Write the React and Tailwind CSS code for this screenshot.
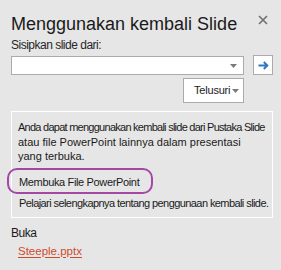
import React from 'react';

const Caret = ({ className }) => (
  <svg className={className} width="7" height="4" viewBox="0 0 7 4">
    <path d="M0 0H7L3.5 4Z" fill="#7a7a7a" />
  </svg>
);

const App = () => {
  return (
    <div className="w-[281px] h-[270px] bg-[#e6e6e6] pl-[11px] pr-[8px] font-['Liberation_Sans',Arial,sans-serif] text-[#262626] overflow-hidden">
      {/* Header */}
      <div className="flex items-start justify-between pt-[12px] pr-[5px]">
        <h1 className="text-[18px] leading-[24px] text-[#1a1a1a]">Menggunakan kembali Slide</h1>
        <button className="mt-[3px]" aria-label="Tutup">
          <svg width="10" height="10" viewBox="0 0 10 10">
            <path d="M1 1L9 9M9 1L1 9" stroke="#737373" strokeWidth="1.7" />
          </svg>
        </button>
      </div>

      <div className="text-[12px] leading-[16px] tracking-[-0.5px] mt-[1px]">Sisipkan slide dari:</div>

      {/* Source input */}
      <div className="flex items-start mt-[2px]">
        <div className="w-[233px] h-[19px] mt-[1px] bg-white border border-[#ababab] flex items-center justify-end pr-[6px]">
          <Caret />
        </div>
        <button className="ml-auto w-[20px] h-[20px] bg-white border border-[#ababab] flex items-center justify-center">
          <svg width="11" height="9" viewBox="0 0 11 9">
            <path d="M0.5 4.5H9M5.8 1L9.3 4.5L5.8 8" stroke="#2f78c4" strokeWidth="2" fill="none" />
          </svg>
        </button>
      </div>

      <div className="w-[233px] flex justify-end mt-[3px]">
        <button className="w-[61px] h-[25px] bg-white border border-[#ababab] flex items-center pl-[10px] text-[11px] tracking-[-0.2px] text-[#1a1a1a]">
          Telusuri
          <Caret className="ml-[2px] mt-[1px]" />
        </button>
      </div>

      {/* Info box */}
      <div className="relative mt-[8px] w-[262px] h-[107px] border border-white pt-[8px] pl-[6px] text-[11px] leading-[14.5px] text-[#1a1a1a]">
        <div className="whitespace-nowrap tracking-[-0.74px]">Anda dapat menggunakan kembali slide dari Pustaka Slide</div>
        <div className="whitespace-nowrap">atau file PowerPoint lainnya dalam presentasi</div>
        <div className="whitespace-nowrap">yang terbuka.</div>
        <div className="whitespace-nowrap mt-[11.5px] pl-[1px] tracking-[-0.35px]">Membuka File PowerPoint</div>
        <div className="whitespace-nowrap mt-[6.5px] pl-[1px] tracking-[-0.58px]">Pelajari selengkapnya tentang penggunaan kembali slide.</div>
        <div className="absolute left-[-5px] top-[56px] w-[146px] h-[26px] rounded-[10px] border-2 border-[#a349a4]" />
      </div>

      {/* Open */}
      <div className="mt-[7px] text-[12px] leading-[16px] tracking-[-0.5px] text-[#1a1a1a]">Buka</div>
      <a href="#" className="block w-fit mt-[1.5px] ml-[7px] text-[11.5px] leading-[16px] text-[#cf4a2a] underline underline-offset-[2px]">
        Steeple.pptx
      </a>
    </div>
  );
};

export default App;
